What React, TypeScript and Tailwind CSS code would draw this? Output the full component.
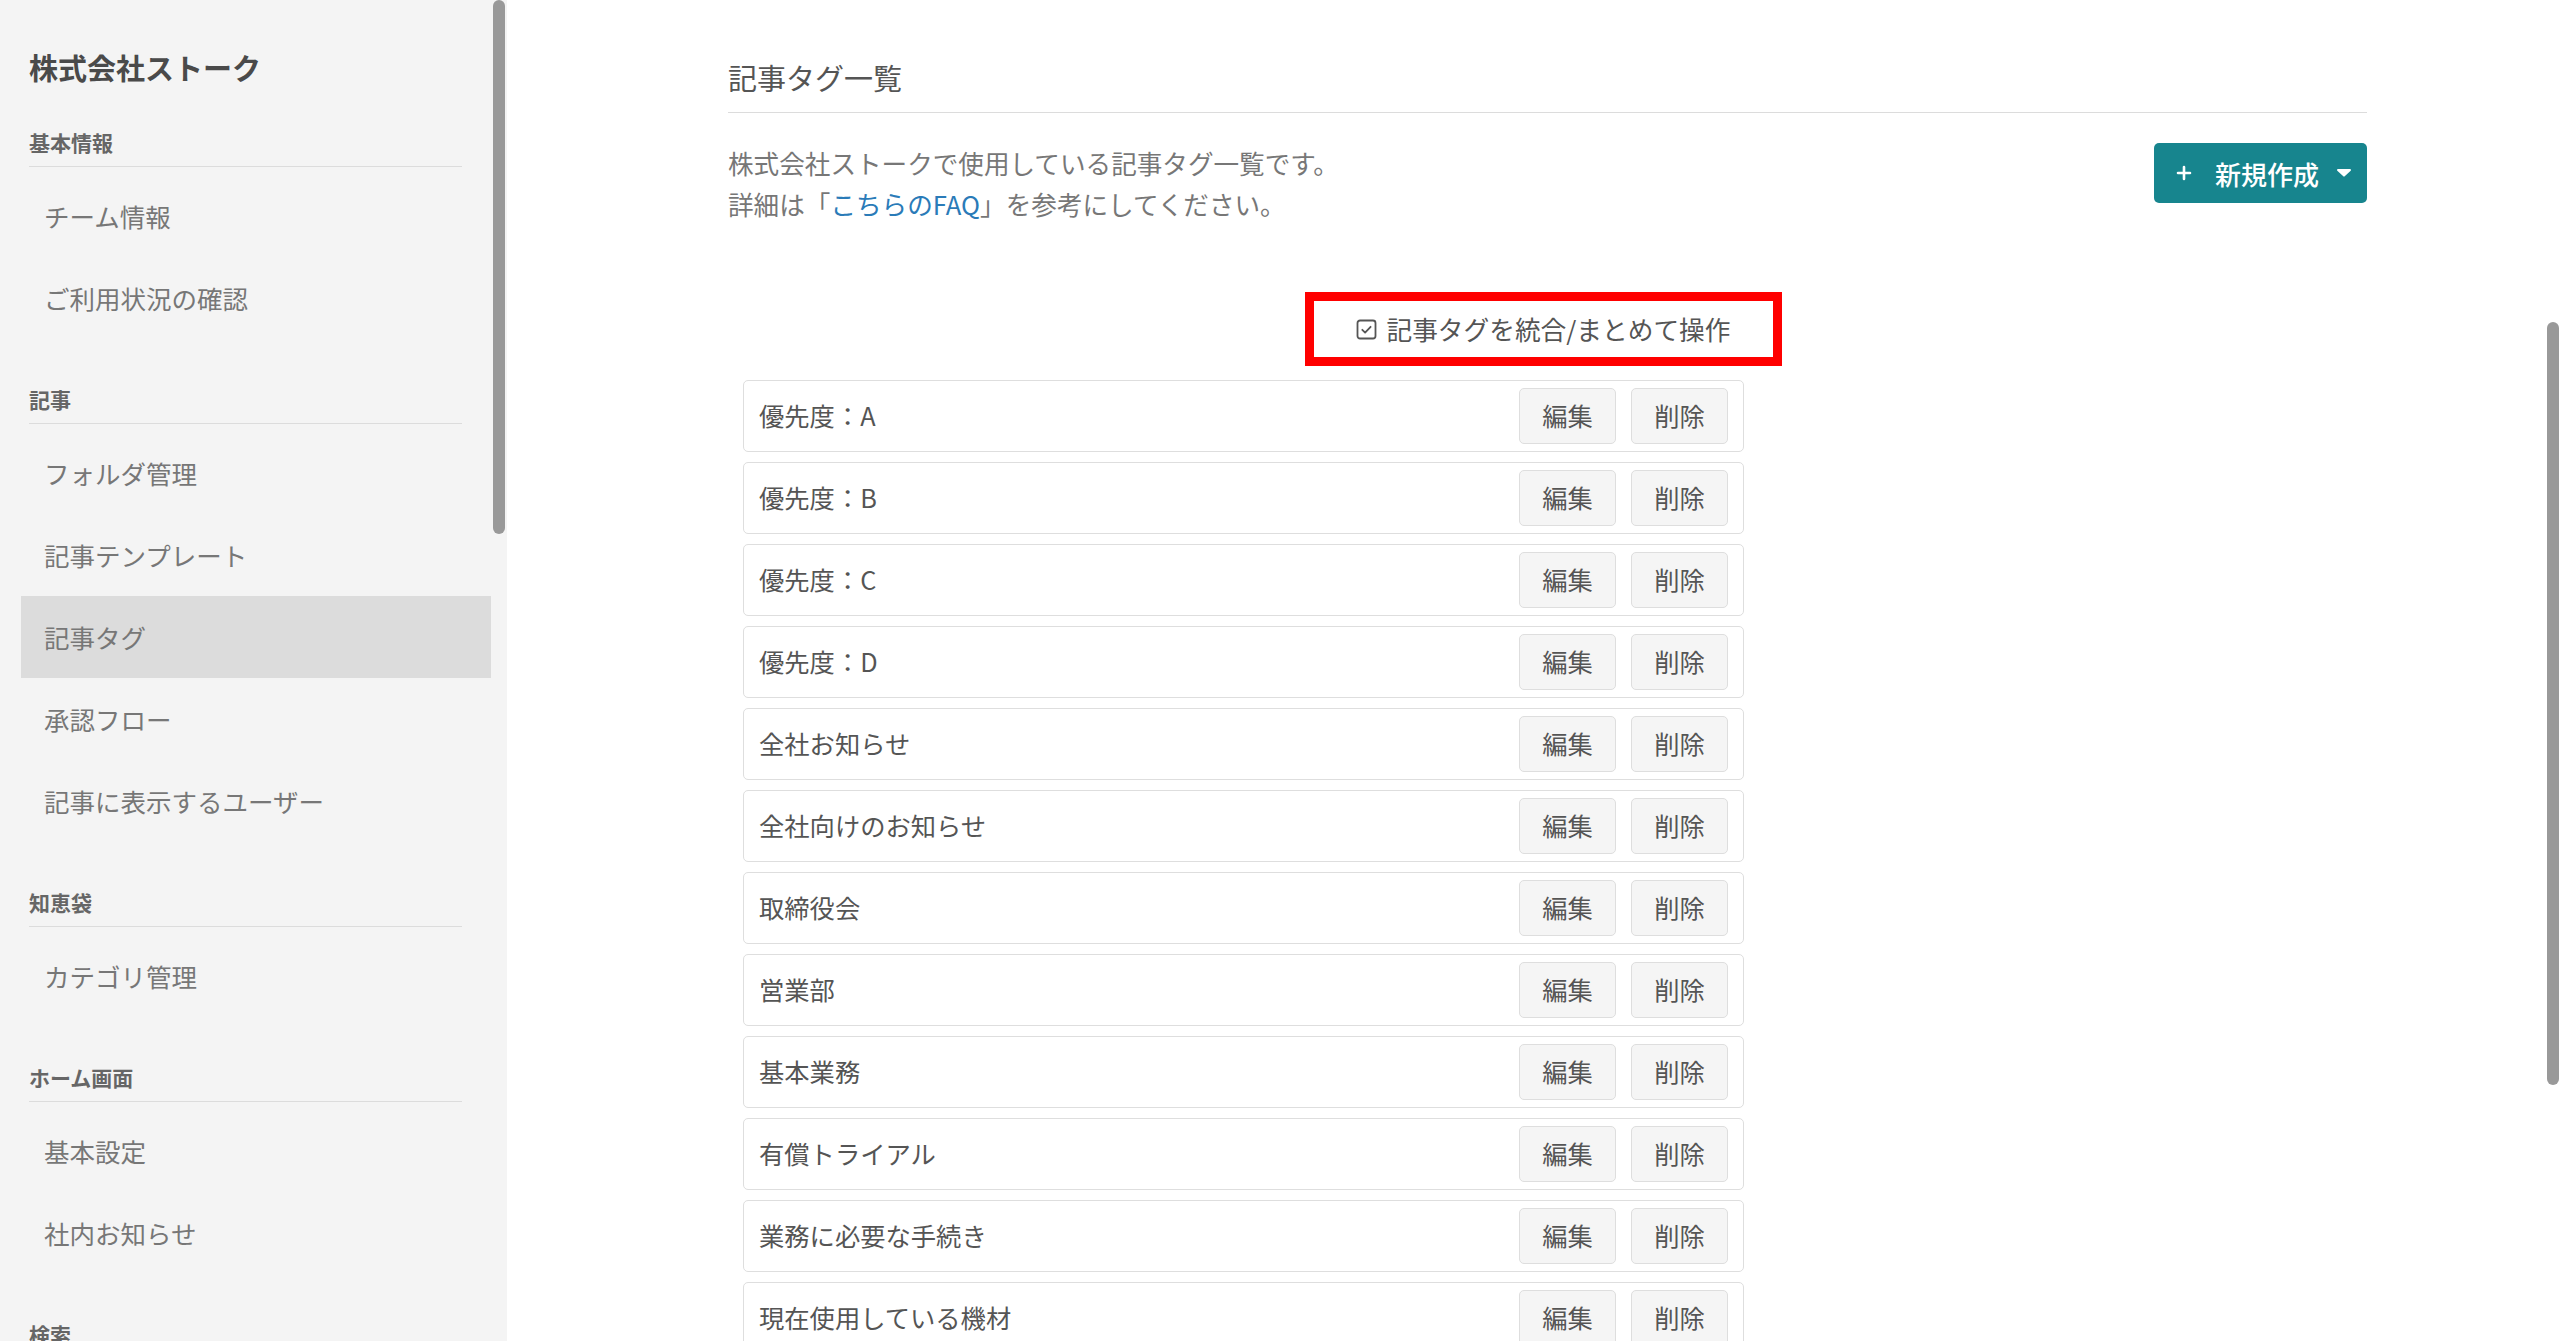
import React from 'react'

const sections = [
  { title: '基本情報', items: ['チーム情報', 'ご利用状況の確認'] },
  { title: '記事', items: ['フォルダ管理', '記事テンプレート', '記事タグ', '承認フロー', '記事に表示するユーザー'] },
  { title: '知恵袋', items: ['カテゴリ管理'] },
  { title: 'ホーム画面', items: ['基本設定', '社内お知らせ'] },
  { title: '検索', items: ['検索設定'] },
]

const tags = [
  '優先度：A',
  '優先度：B',
  '優先度：C',
  '優先度：D',
  '全社お知らせ',
  '全社向けのお知らせ',
  '取締役会',
  '営業部',
  '基本業務',
  '有償トライアル',
  '業務に必要な手続き',
  '現在使用している機材',
]

const Sidebar = () => {
  return (
    <aside className="relative h-full w-[507px] shrink-0 overflow-hidden bg-[#f4f4f4]">
      <div className="w-[491px] pl-[21px] pt-[47px]">
        <h1 className="ml-2 text-[29px] font-bold leading-[40px] text-[#4a4a4a]">株式会社ストーク</h1>
        {sections.map((s, i) => (
          <div key={s.title} className={i === 0 ? 'mt-[41px]' : 'mt-[46px]'}>
            <h3 className="ml-2 mr-[29px] border-b border-[#dcdcdc] pb-[10px] text-[21px] font-bold leading-[28px] text-[#666]">
              {s.title}
            </h3>
            <ul className="mt-2">
              {s.items.map((item) => (
                <li
                  key={item}
                  className={`flex h-[82px] items-center px-[23px] text-[25.5px] text-[#777] ${
                    item === '記事タグ' ? 'bg-[#dcdcdc]' : ''
                  }`}
                >
                  {item}
                </li>
              ))}
            </ul>
          </div>
        ))}
      </div>
      {/* scrollbar */}
      <div className="absolute right-[2px] top-0 h-[534px] w-[12px] rounded-full bg-[#999]" />
    </aside>
  )
}

const TagRow = ({ name }: { name: string }) => (
  <li className="flex h-[72px] items-center justify-between rounded-[5px] border border-[#dedede] px-[15px]">
    <span className="text-[25.3px] text-[#555]">{name}</span>
    <div className="flex gap-[15px]">
      <button className="h-[56px] w-[97px] rounded-[5px] border border-[#dedede] bg-[#f5f5f5] text-[25.3px] text-[#555]">
        編集
      </button>
      <button className="h-[56px] w-[97px] rounded-[5px] border border-[#dedede] bg-[#f5f5f5] text-[25.3px] text-[#555]">
        削除
      </button>
    </div>
  </li>
)

export default function App() {
  return (
    <div className="flex h-[1341px] w-full overflow-hidden bg-white font-['Noto_Sans_CJK_JP','Noto_Sans',sans-serif]">
      <Sidebar />
      <main className="relative h-full flex-1 overflow-hidden">
        <div className="ml-[221px] w-[1639px] pt-[57px]">
          <h2 className="border-b border-[#dcdcdc] pb-[15px] text-[29px] leading-[40px] text-[#555]">記事タグ一覧</h2>
          <div className="mt-[29px] flex items-start justify-between">
            <p className="text-[25.6px] leading-[41px] text-[#777]">
              株式会社ストークで使用している記事タグ一覧です。
              <br />
              詳細は「<span className="text-[#2a7bb8]">こちらのFAQ</span>」を参考にしてください。
            </p>
            <button className="mt-px flex h-[60px] w-[213px] items-center rounded-[5px] bg-[#17858e] pl-[22px] text-white">
              <svg width="16" height="16" viewBox="0 0 16 16" fill="none" stroke="currentColor" strokeWidth="2.6" strokeLinecap="round">
                <path d="M8 2v12M2 8h12" />
              </svg>
              <span className="ml-[23px] text-[26px] font-medium">新規作成</span>
              <svg className="ml-[18px]" width="14" height="8" viewBox="0 0 14 8" fill="currentColor">
                <path d="M1 0h12a1 1 0 0 1 .7 1.7L7.7 7.3a1 1 0 0 1-1.4 0L.3 1.7A1 1 0 0 1 1 0z" />
              </svg>
            </button>
          </div>

          <div className="mt-[68px] flex w-[1054px] justify-end">
            <button className="flex h-[74px] w-[477px] items-center justify-center gap-[9px] border-[9px] border-[#ff0000] bg-white text-[25.7px] text-[#555]">
              <svg width="21" height="21" viewBox="0 0 21 21" fill="none" stroke="#555" strokeWidth="1.8" strokeLinecap="round" strokeLinejoin="round">
                <rect x="1.5" y="1.5" width="18" height="18" rx="2.5" />
                <path d="M6.3 10.8l2.8 2.8 5.5-5.8" />
              </svg>
              <span>記事タグを統合/まとめて操作</span>
            </button>
          </div>

          <ul className="ml-[15px] mt-[14px] flex w-[1001px] flex-col gap-[10px]">
            {tags.map((t) => (
              <TagRow key={t} name={t} />
            ))}
          </ul>
        </div>
        {/* scrollbar */}
        <div className="absolute right-px top-[322px] h-[763px] w-[12px] rounded-full bg-[#999]" />
      </main>
    </div>
  )
}
